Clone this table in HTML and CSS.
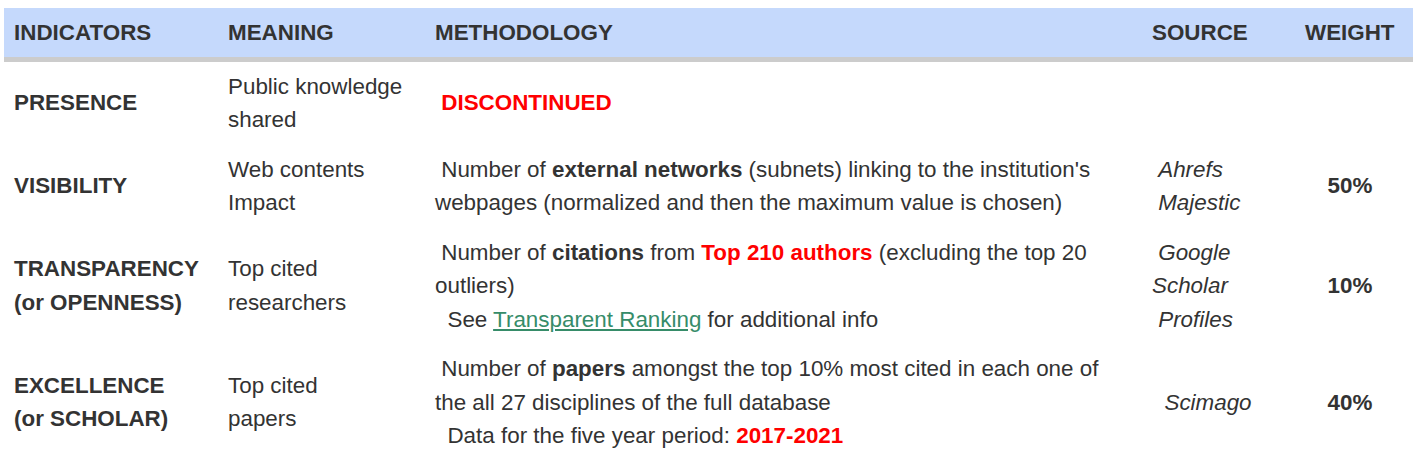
FILE: index.html
```html
<!DOCTYPE html>
<html lang="en">
<head>
<meta charset="utf-8">
<title>Indicators</title>
<link rel="stylesheet" href="styles.css">
</head>
<body>
<table class="ind-table">
  <colgroup>
    <col class="c-ind"><col class="c-mean"><col class="c-meth"><col class="c-src"><col class="c-wt">
  </colgroup>
  <thead>
    <tr>
      <th>INDICATORS</th>
      <th>MEANING</th>
      <th>METHODOLOGY</th>
      <th>SOURCE</th>
      <th>WEIGHT</th>
    </tr>
  </thead>
  <tbody>
    <tr>
      <td class="ind">PRESENCE</td>
      <td>Public knowledge<br>shared</td>
      <td>&nbsp;<strong class="red">DISCONTINUED</strong></td>
      <td class="src"></td>
      <td class="wt"></td>
    </tr>
    <tr>
      <td class="ind">VISIBILITY</td>
      <td>Web contents<br>Impact</td>
      <td>&nbsp;Number of <strong>external networks</strong> (subnets) linking to the institution's<br>webpages (normalized and then the maximum value is chosen)</td>
      <td class="src">&nbsp;Ahrefs<br>&nbsp;Majestic</td>
      <td class="wt">50%</td>
    </tr>
    <tr>
      <td class="ind">TRANSPARENCY<br>(or OPENNESS)</td>
      <td>Top cited<br>researchers</td>
      <td>&nbsp;Number of <strong>citations</strong> from <strong class="red">Top 210 authors</strong> (excluding the top 20<br>outliers)<br>&nbsp;&nbsp;See <a href="#" class="link">Transparent Ranking</a> for additional info</td>
      <td class="src">&nbsp;Google<br>Scholar<br>&nbsp;Profiles</td>
      <td class="wt">10%</td>
    </tr>
    <tr>
      <td class="ind">EXCELLENCE<br>(or SCHOLAR)</td>
      <td>Top cited<br>papers</td>
      <td>&nbsp;Number of <strong>papers</strong> amongst the top 10% most cited in each one of<br>the all 27 disciplines of the full database<br>&nbsp;&nbsp;Data for the five year period: <strong class="red">2017-2021</strong></td>
      <td class="src">&nbsp;&nbsp;Scimago</td>
      <td class="wt">40%</td>
    </tr>
  </tbody>
</table>
</body>
</html>
```

FILE: styles.css
```css
html, body {
  background: #ffffff;
}
body {
  margin: 8px 6px 0 4px;
  font-family: "Liberation Sans", Arial, sans-serif;
  font-size: 22.4px;
  line-height: 33.5px;
  color: #333333;
}
.ind-table {
  width: 1409px;
  table-layout: fixed;
  border-collapse: collapse;
  border-spacing: 0;
}
.c-ind { width: 214px; }
.c-mean { width: 207px; }
.c-meth { width: 717px; }
.c-src { width: 153px; }
.c-wt { width: 118px; }
.ind-table th {
  background: #c5d9fc;
  border-bottom: 5px solid #cccccc;
  text-align: left;
  font-weight: bold;
  padding: 8px 10px 7px 10px;
  white-space: nowrap;
}
.ind-table td {
  padding: 8px 10px;
  vertical-align: middle;
  white-space: nowrap;
}
.ind-table td.ind {
  font-weight: bold;
}
.ind-table td.src {
  font-style: italic;
}
.ind-table td.wt {
  font-weight: bold;
  text-align: center;
  padding-right: 18px;
}
.red {
  color: #ff0000;
}
.link {
  color: #368c69;
  text-decoration: underline;
}
```
